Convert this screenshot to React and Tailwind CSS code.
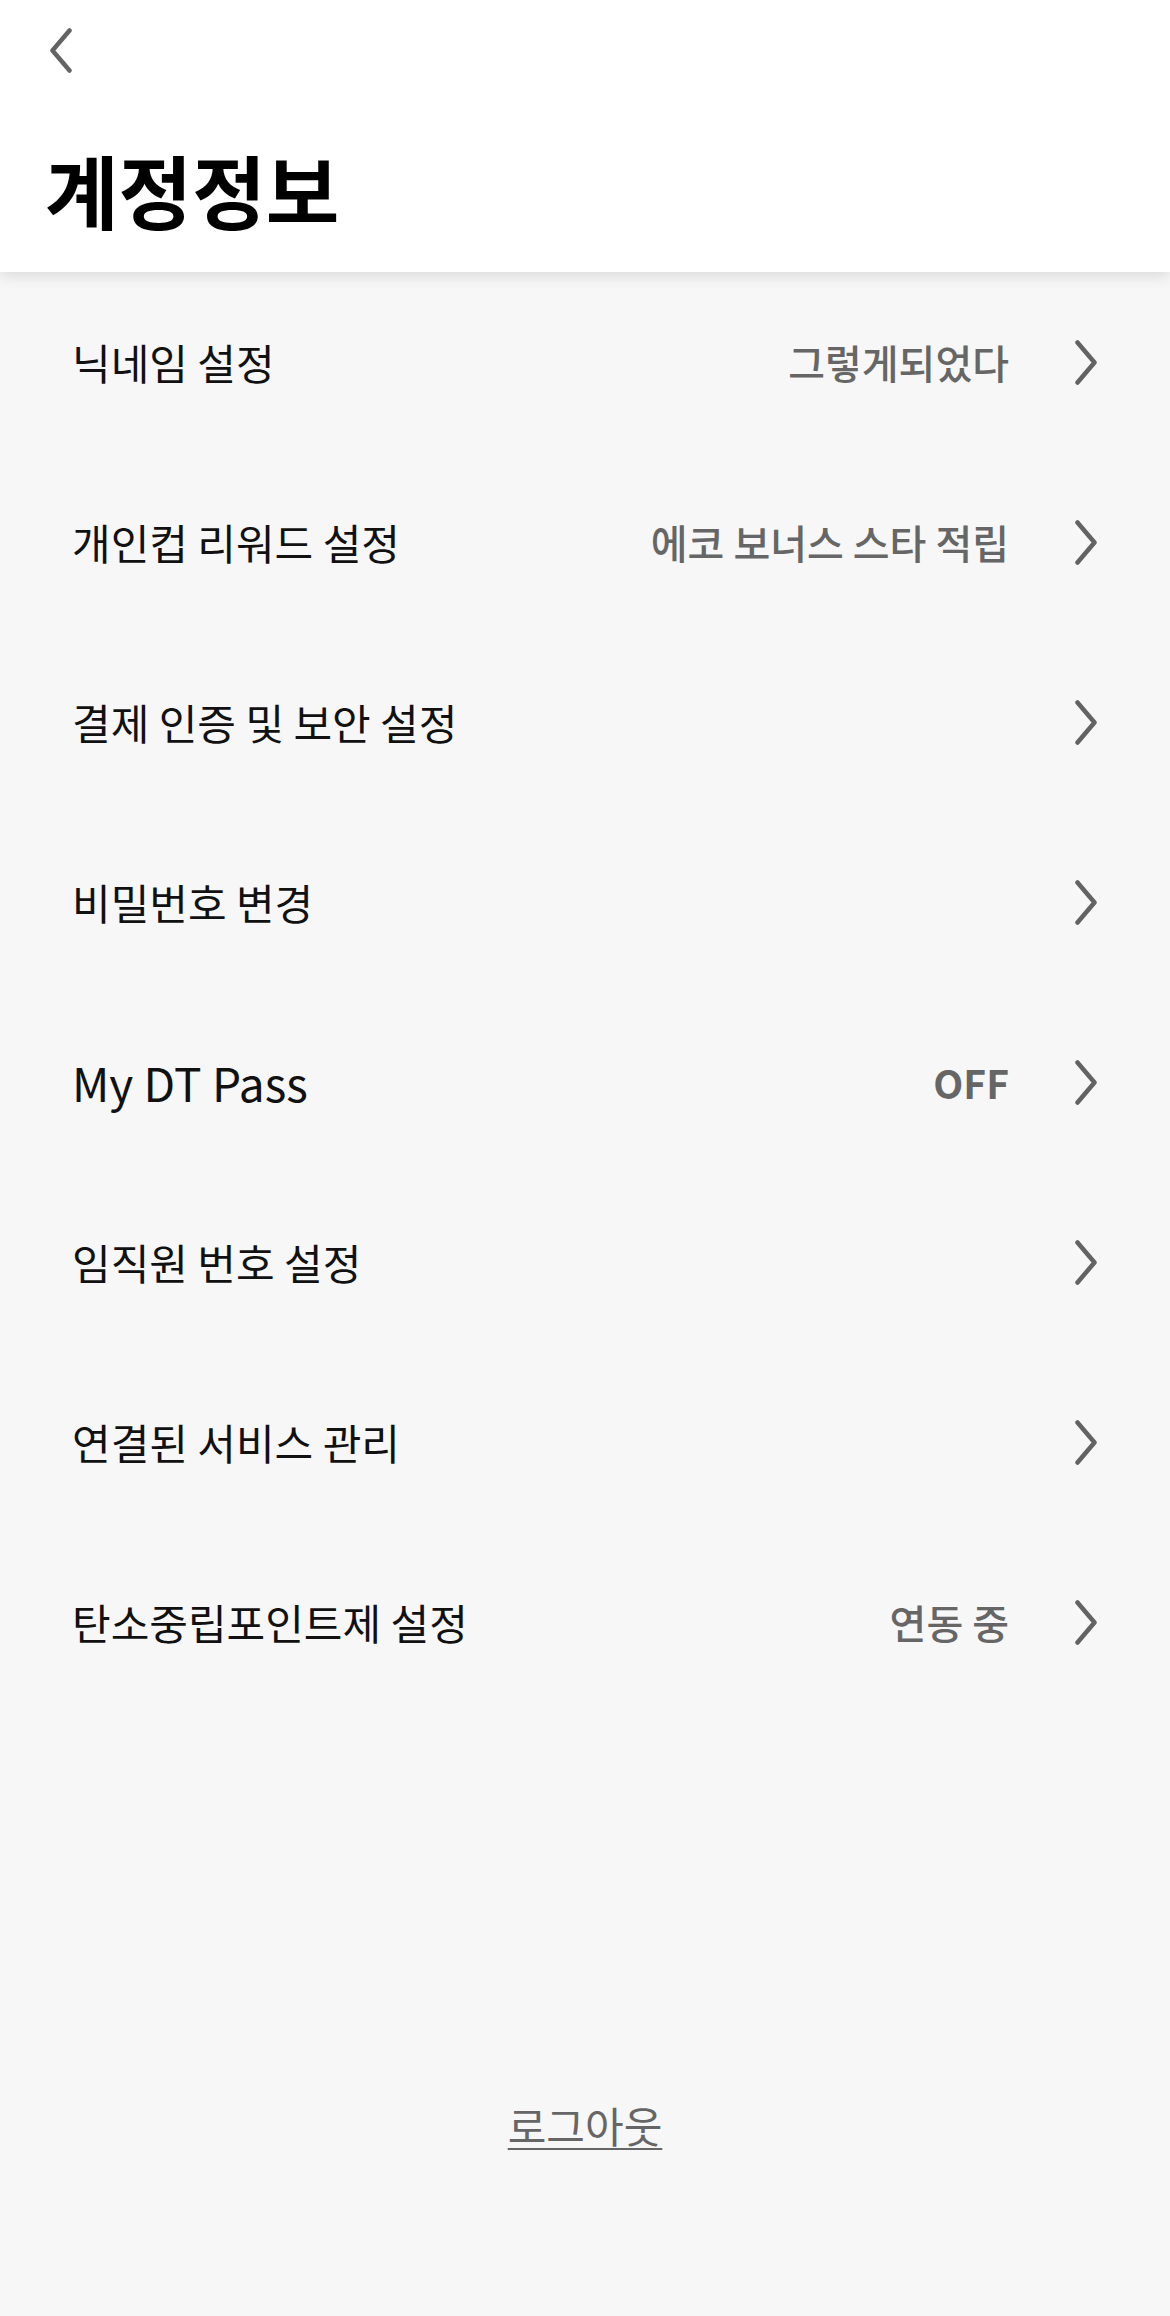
const rows = [
  { label: '닉네임 설정', value: '그렇게되었다' },
  { label: '개인컵 리워드 설정', value: '에코 보너스 스타 적립' },
  { label: '결제 인증 및 보안 설정' },
  { label: '비밀번호 변경' },
  { label: 'My DT Pass', value: 'OFF', latin: true },
  { label: '임직원 번호 설정' },
  { label: '연결된 서비스 관리' },
  { label: '탄소중립포인트제 설정', value: '연동 중' },
]

function Chevron({ flip = false }) {
  return (
    <svg width="22" height="45" viewBox="0 0 22 45" fill="none" className="shrink-0">
      <path
        d={flip ? 'M19.5 2.5 L2.5 22.5 L19.5 42.5' : 'M2.5 2.5 L19.5 22.5 L2.5 42.5'}
        stroke="#636363"
        strokeWidth="4.5"
        strokeLinecap="round"
        strokeLinejoin="round"
      />
    </svg>
  )
}

function Row({ label, value, latin }) {
  return (
    <div className="h-[180px] flex items-center justify-between pl-[72px] pr-[73px]">
      <span className={`${latin ? 'text-[46px]' : 'text-[42px]'} text-[#111] leading-none`}>{label}</span>
      <div className="flex items-center gap-[66px]">
        {value && (
          <span className={`text-[#666] leading-none ${latin ? 'font-bold text-[39px]' : 'font-medium text-[40px]'}`}>
            {value}
          </span>
        )}
        <Chevron />
      </div>
    </div>
  )
}

export default function App() {
  return (
    <div
      className="min-h-[2316px] bg-[#f7f7f7]"
      style={{ fontFamily: '"Noto Sans CJK KR", "Noto Sans", sans-serif' }}
    >
      <header className="relative z-10 h-[272px] bg-white shadow-[0_4px_14px_rgba(0,0,0,0.12)]">
        <div className="h-[100px] flex items-center pl-[50px]">
          <Chevron flip />
        </div>
        <h1 className="pt-[48px] pl-[45px] text-[80px] font-bold leading-none text-black">계정정보</h1>
      </header>

      <div className="flex flex-col">
        {rows.map((r) => (
          <Row key={r.label} {...r} />
        ))}
      </div>

      <div className="mt-[384px] flex justify-center">
        <button className="text-[42px] leading-[1.4] text-[#666] underline underline-offset-[5px] decoration-2">
          로그아웃
        </button>
      </div>
    </div>
  )
}
